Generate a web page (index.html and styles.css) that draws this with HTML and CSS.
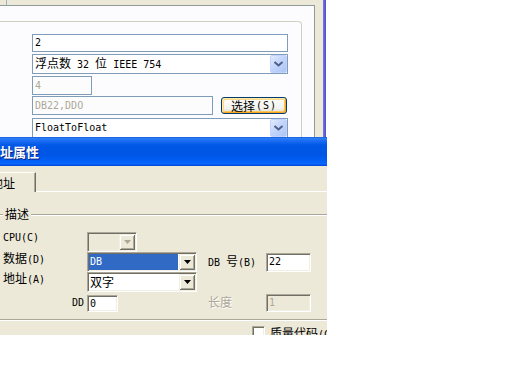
FILE: index.html
```html
<!DOCTYPE html>
<html>
<head>
<meta charset="utf-8">
<link rel="stylesheet" href="styles.css">
</head>
<body>
<div class="screen">
  <div class="win1">
    <div class="w1-main">
      <div class="w1-strip"><div class="w1-tick"></div></div>
      <div class="w1-page">
        <div class="grp">
          <div class="xp-field wide">2</div>
          <div class="xp-combo">
            <span class="val"><span class="c">浮点数</span> 32 <span class="c">位</span> IEEE 754</span>
            <span class="xp-drop"><svg width="15" height="16" viewBox="0 0 15 16"><path d="M3.5 6 L7.5 9.5 L11.5 6" fill="none" stroke="#4d6185" stroke-width="2"/></svg></span>
          </div>
          <div class="xp-field short dis">4</div>
          <div class="xp-row">
            <div class="xp-field mid dis">DB22,DDO</div>
            <button class="xp-btn"><span class="c">选择</span><span class="acc">(S)</span></button>
          </div>
          <div class="xp-combo">
            <span class="val">FloatToFloat</span>
            <span class="xp-drop"><svg width="15" height="16" viewBox="0 0 15 16"><path d="M3.5 6 L7.5 9.5 L11.5 6" fill="none" stroke="#4d6185" stroke-width="2"/></svg></span>
          </div>
        </div>
      </div>
    </div>
    <div class="w1-side"></div>
    <div class="w1-edge"></div>
  </div>

  <div class="dlg">
    <div class="title"><span class="c tt">地址属性</span></div>
    <div class="body">
      <div class="tabs">
        <div class="tab"><span class="c tabtxt">地址</span></div>
        <div class="tabfill"></div>
      </div>
      <div class="gb">
        <div class="gb-line gb-l"></div>
        <div class="gb-t"><span class="c">描述</span></div>
        <div class="gb-line gb-r"></div>
      </div>
      <div class="form">
        <div class="lbl r1">CPU(C)</div>
        <div class="cb dis r1 cpu"><span class="cb-in"></span><span class="cb-btn"><svg width="7" height="4" viewBox="0 0 7 4"><polygon points="0,0 7,0 3.5,4" fill="#aca899"/></svg></span></div>

        <div class="lbl r2"><span class="c">数据</span>(D)</div>
        <div class="cb r2 full"><span class="cb-in sel">DB</span><span class="cb-btn"><svg width="7" height="4" viewBox="0 0 7 4"><polygon points="0,0 7,0 3.5,4" fill="#000"/></svg></span></div>
        <div class="lbl2 r2">DB <span class="c">号</span>(B)</div>
        <div class="ed r2 e22">22</div>

        <div class="lbl r3"><span class="c">地址</span>(A)</div>
        <div class="cb r3 full"><span class="cb-in"><span class="c">双字</span></span><span class="cb-btn"><svg width="7" height="4" viewBox="0 0 7 4"><polygon points="0,0 7,0 3.5,4" fill="#000"/></svg></span></div>

        <div class="lbl-dd r5">DD</div>
        <div class="ed r5 e0">0</div>
        <div class="lbl2 r5 gray"><span class="c">长度</span></div>
        <div class="ed r5 e1 dis">1</div>
      </div>
      <div class="sep"></div>
      <div class="chkrow">
        <span class="chk"></span>
        <span class="chktxt"><span class="c">质量代码</span>(C)</span>
      </div>
    </div>
  </div>
</div>
</body>
</html>
```

FILE: styles.css
```css
* { box-sizing: border-box; }
html, body { margin: 0; padding: 0; background: #fff; }
body {
  width: 512px;
  height: 384px;
  overflow: hidden;
  font-family: "DejaVu Sans Mono", "Noto Sans CJK SC", monospace;
  font-size: 10px;
  line-height: 14px;
  color: #000;
}
.c {
  font-family: "Noto Sans CJK SC", sans-serif;
  font-size: 12px;
}
.screen { width: 327px; }

/* ---------- background window ---------- */
.win1 { display: flex; height: 137px; overflow: hidden; width: 326px; }
.w1-main { width: 315px; display: flex; flex-direction: column; }
.w1-strip { height: 5px; background: #ece9d8; padding-left: 6px; }
.w1-tick { width: 1px; height: 5px; background: #a6b1be; }
.w1-page {
  flex: 1;
  background: #fcfcfe;
  border-top: 1px solid #919b9c;
  border-right: 1px solid #919b9c;
  padding-top: 15px;
}
.w1-side { width: 8px; background: #ece9d8; }
.w1-edge { width: 3px; background: linear-gradient(to right, #7b7be0, #4a4ad0); }

.grp {
  margin-left: -5px;
  width: 307px;
  height: 200px;
  border-top: 1px solid #d0d0bf;
  border-right: 1px solid #d0d0bf;
  border-top-right-radius: 4px;
  padding-top: 12px;
  padding-left: 37px;
}
.xp-field {
  height: 18px;
  border: 1px solid #7f9db9;
  background: #fff;
  padding-left: 2px;
  display: flex;
  align-items: center;
}
.xp-field.wide { width: 256px; }
.xp-field.short { width: 60px; height: 19px; margin-top: 2px; }
.xp-field.mid { width: 181px; height: 19px; }
.xp-field.dis { color: #aca899; background: #fcfcfc; }
.xp-row { display: flex; align-items: flex-start; margin-top: 1px; }
.xp-combo {
  width: 256px;
  height: 20px;
  border: 1px solid #7f9db9;
  background: #fff;
  margin-top: 2px;
  display: flex;
  align-items: center;
  padding-left: 2px;
}
.xp-row + .xp-combo { margin-top: 3px; }
.xp-combo .val { flex: 1; white-space: nowrap; }
.xp-drop {
  width: 17px;
  height: 18px;
  border: 1px solid #c3d3fd;
  border-radius: 2px;
  background: linear-gradient(135deg, #e3ebfd 0%, #c4d5fb 45%, #adc5f6 100%);
  display: flex;
  align-items: center;
  justify-content: center;
}
.xp-btn {
  margin-left: 8px;
  margin-top: 1px;
  width: 66px;
  height: 17px;
  padding: 0;
  border: 1px solid #003c74;
  border-radius: 3px;
  background: linear-gradient(#ffffff, #f3f2ec 70%, #dcd6cb);
  box-shadow: inset 1px 1px 0 #ffeaa8, inset -1px -1px 0 #f5a623, inset 2px 2px 0 #fdd98a, inset -2px -2px 0 #fbc760;
  display: flex;
  align-items: center;
  justify-content: center;
  font: inherit;
  color: #000;
  line-height: 14px;
}
.xp-btn .acc { letter-spacing: 1px; margin-left: 1px; }

/* ---------- dialog ---------- */
.dlg { width: 327px; }
.title {
  height: 29px;
  background: linear-gradient(to bottom, #0a4fd0 0px, #2f7ef6 1px, #1a6cf2 4px, #0058e6 8px, #0055e5 60%, #005ff4 82%, #0a68ff 92%, #0047d0 100%);
  display: flex;
  align-items: center;
  overflow: hidden;
}
.title .tt {
  margin-left: -13px;
  font-size: 13px;
  font-weight: bold;
  color: #fff;
  text-shadow: 1px 1px 0 #0b2380;
  white-space: nowrap;
}
.body {
  height: 169px;
  background: #ece9d8;
  overflow: hidden;
  padding-top: 6px;
}
.tabs { display: flex; height: 20px; }
.tab {
  width: 36px;
  height: 20px;
  border-top: 1px solid #fff;
  border-right: 1px solid #716f64;
  box-shadow: inset -1px 0 0 #aca899;
  display: flex;
  align-items: center;
  white-space: nowrap;
}
.tabtxt { margin-left: -9px; }
.tabfill { flex: 1; border-bottom: 1px solid #fff; }

.gb { display: flex; height: 14px; margin-top: 15px; }
.gb-line {
  height: 2px;
  margin-top: 7px;
  border-top: 1px solid #aca899;
  border-bottom: 1px solid #fff;
}
.gb-l { width: 3px; }
.gb-r { flex: 1; }
.gb-t { padding: 0 2px; line-height: 14px; }

.form {
  margin-top: 11px;
  padding-left: 3px;
  display: grid;
  grid-template-columns: 84px 110px 11px 58px 45px;
  grid-template-rows: 20px 20px 20px 2px 18px;
}
.r1 { grid-row: 1; }
.r2 { grid-row: 2; }
.r3 { grid-row: 3; }
.r5 { grid-row: 5; }
.lbl { grid-column: 1; align-self: start; margin-top: -1px; white-space: nowrap; }
.lbl-dd { grid-column: 1; align-self: center; justify-self: end; margin-right: 3px; }
.lbl2 { grid-column: 4; align-self: center; white-space: nowrap; }
.lbl2.gray { color: #aca899; text-shadow: 1px 1px 0 #fff; }

.cb, .ed {
  border: 1px solid;
  border-color: #aca899 #fff #fff #aca899;
  box-shadow: inset 1px 1px 0 #716f64, inset -1px -1px 0 #f1efe2;
  padding: 1px;
}
.cb { grid-column: 2; display: flex; height: 20px; background: #fff; }
.cb.cpu { width: 50px; background: #ece9d8; }
.cb-in {
  flex: 1;
  padding-left: 1px;
  display: flex;
  align-items: center;
  white-space: nowrap;
}
.cb-in.sel { background: #316ac5; color: #fff; margin-right: 1px; }
.cb-btn {
  width: 16px;
  height: 16px;
  background: #ece9d8;
  box-shadow: inset 1px 1px 0 #f1efe2, inset -1px -1px 0 #716f64, inset 2px 2px 0 #fff, inset -2px -2px 0 #aca899;
  display: flex;
  align-items: center;
  justify-content: center;
}
.ed {
  background: #fff;
  display: flex;
  align-items: center;
  padding-left: 2px;
}
.e22 { grid-column: 5; height: 19px; align-self: center; }
.e0 { grid-column: 2; width: 31px; height: 17px; align-self: end; }
.e1 { grid-column: 5; height: 18px; }
.ed.dis { background: #ece9d8; color: #aca899; }

.sep {
  margin-top: 7px;
  height: 2px;
  border-top: 1px solid #aca899;
  border-bottom: 1px solid #fff;
}
.chkrow {
  margin-top: 5px;
  padding-left: 252px;
  display: flex;
  align-items: flex-start;
  white-space: nowrap;
}
.chk {
  width: 13px;
  height: 13px;
  flex: none;
  background: #fff;
  border: 1px solid;
  border-color: #aca899 #fff #fff #aca899;
  box-shadow: inset 1px 1px 0 #716f64, inset -1px -1px 0 #f1efe2;
}
.chktxt { margin-left: 5px; line-height: 14px; }
```
